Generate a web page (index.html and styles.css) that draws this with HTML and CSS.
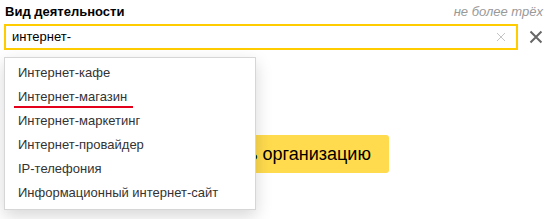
FILE: index.html
```html
<!DOCTYPE html>
<html lang="ru">
<head>
<meta charset="utf-8">
<link rel="stylesheet" href="styles.css">
</head>
<body>
<div class="form">
  <div class="head">
    <span class="label">Вид деятельности</span>
    <span class="hint">не более трёх</span>
  </div>
  <div class="row">
    <div class="field">
      <span class="value">интернет-</span>
      <svg class="clear" width="10" height="10" viewBox="0 0 10 10"><path d="M1 1L9 9M9 1L1 9" stroke="#c4c4c4" stroke-width="1" fill="none"/></svg>
      <ul class="menu">
        <li class="item">Интернет-кафе</li>
        <li class="item marked">Интернет-магазин</li>
        <li class="item">Интернет-маркетинг</li>
        <li class="item">Интернет-провайдер</li>
        <li class="item">IP-телефония</li>
        <li class="item">Информационный интернет-сайт</li>
      </ul>
    </div>
    <svg class="remove" width="14" height="14" viewBox="0 0 14 14"><path d="M1.5 1.5L12.5 12.5M12.5 1.5L1.5 12.5" stroke="#666" stroke-width="2" fill="none"/></svg>
  </div>
  <div class="actions">
    <button class="btn">Добавить организацию</button>
  </div>
</div>
</body>
</html>
```
FILE: styles.css
```css
html, body {
  margin: 0;
  padding: 0;
  background: #fff;
}
body {
  font-family: "Liberation Sans", Arial, sans-serif;
  font-size: 13px;
  color: #000;
  width: 553px;
  height: 219px;
  overflow: hidden;
}
.form {
  padding: 4px 10px 0 4px;
}
.head {
  display: flex;
  justify-content: space-between;
  align-items: baseline;
  line-height: 16px;
  padding-left: 1px;
}
.label {
  font-weight: bold;
}
.hint {
  font-style: italic;
  color: #999;
}
.row {
  margin-top: 4px;
  display: flex;
  align-items: center;
}
.field {
  position: relative;
  width: 516px;
  height: 26px;
  box-sizing: border-box;
  border: 2px solid #fc0;
  display: flex;
  align-items: center;
  padding: 0 10px 0 6px;
}
.value {
  flex: 1;
  line-height: 20px;
}
.clear {
  display: block;
}
.remove {
  display: block;
  margin-left: 11px;
}
.menu {
  position: absolute;
  left: -2px;
  top: 31px;
  width: 252px;
  box-sizing: border-box;
  margin: 0;
  padding: 3px 0 4px;
  list-style: none;
  background: #fff;
  border: 1px solid #d6d6d6;
  box-shadow: 0 6px 16px rgba(0, 0, 0, 0.16);
  z-index: 2;
}
.item {
  position: relative;
  line-height: 24px;
  padding-left: 13px;
  color: #333;
  white-space: nowrap;
}
.marked::after {
  content: "";
  position: absolute;
  left: 9px;
  top: 21px;
  width: 119px;
  height: 2px;
  background: #e3001b;
}
.actions {
  margin-top: 85px;
  display: flex;
  justify-content: flex-start;
  padding-left: 156px;
}
.btn {
  font-family: "Liberation Sans", Arial, sans-serif;
  font-size: 18px;
  color: #000;
  background: #ffdb4d;
  border: none;
  border-radius: 3px;
  height: 38px;
  padding: 0 18px;
  cursor: pointer;
}
```
